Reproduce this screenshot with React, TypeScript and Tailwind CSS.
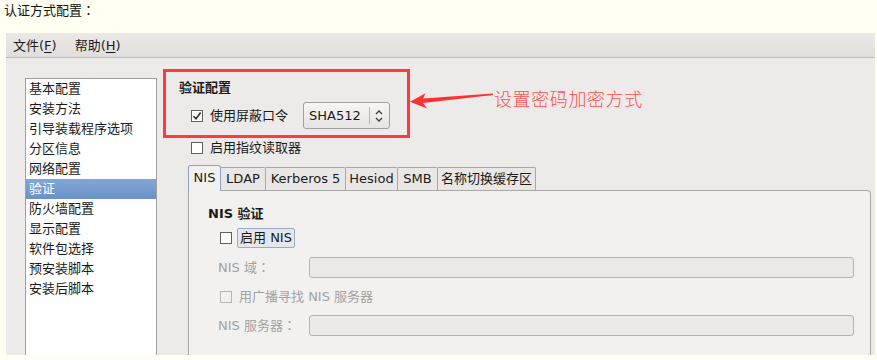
import { ReactNode } from 'react'

const sidebarItems = [
  '基本配置',
  '安装方法',
  '引导装载程序选项',
  '分区信息',
  '网络配置',
  '验证',
  '防火墙配置',
  '显示配置',
  '软件包选择',
  '预安装脚本',
  '安装后脚本',
]

const tabs = [
  { label: 'NIS', w: 'w-[33px]' },
  { label: 'LDAP', w: 'w-[45px]' },
  { label: 'Kerberos 5', w: 'w-[80px]' },
  { label: 'Hesiod', w: 'w-[52px]' },
  { label: 'SMB', w: 'w-[40px]' },
  { label: '名称切换缓存区', w: 'w-[98px]' },
]

function CheckBox({ checked = false, disabled = false }: { checked?: boolean; disabled?: boolean }) {
  return (
    <span
      className={`flex h-[12px] w-[12px] shrink-0 items-center justify-center border ${
        disabled ? 'border-[#b8b6b4] bg-[#f2f1f0]' : 'border-[#5f5f5f] bg-white'
      }`}
    >
      {checked && (
        <svg width="10" height="10" viewBox="0 0 10 10">
          <path d="M1.5 5.2 L4 7.8 L8.6 1.6" fill="none" stroke="#2e2e2e" strokeWidth="1.6" />
        </svg>
      )}
    </span>
  )
}

// centred full-width colon, as the original bitmap font draws it
function Colon() {
  return <span className="font-['Noto_Sans_CJK_TC',sans-serif]">：</span>
}

function TextField() {
  return <div className="h-[21px] w-[545px] rounded-[3px] border border-[#b5b3b1] bg-[#ebeae8]" />
}

function MenuItem({ text, mnemonic }: { text: string; mnemonic: string }) {
  return (
    <span>
      {text}(<span className="underline underline-offset-2">{mnemonic}</span>)
    </span>
  )
}

function Row({ children, className = '' }: { children: ReactNode; className?: string }) {
  return <div className={`flex items-center ${className}`}>{children}</div>
}

export default function App() {
  return (
    <div className="flex h-[360px] w-[877px] flex-col overflow-hidden bg-[#fffff2] font-['DejaVu_Sans','Noto_Sans_CJK_SC',sans-serif] text-[13px] text-[#1a1a1a]">
      {/* caption above the screenshot */}
      <div className="h-[33px] shrink-0 pl-[4px] pt-[2px] leading-[16px] text-[#111]">
        认证方式配置<Colon />
      </div>

      <div className="ml-[6px] flex h-[322px] w-[869px] flex-col bg-[#edebe9]">
        {/* menu bar */}
        <div className="flex h-[25px] shrink-0 items-center gap-[18px] border-b border-[#bebbb8] bg-gradient-to-b from-[#ebe9e7] to-[#e1dfdd] pl-[7px] pt-[1px]">
          <MenuItem text="文件" mnemonic="F" />
          <MenuItem text="帮助" mnemonic="H" />
        </div>

        <div className="flex min-h-0 flex-1">
          {/* section list */}
          <div className="ml-[19px] mt-[20px] w-[132px] shrink-0 border-x border-t border-[#9f9f9f] bg-white">
            {sidebarItems.map((item) => (
              <div
                key={item}
                className={`h-[20px] pl-[3px] leading-[20px] ${
                  item === '验证'
                    ? 'bg-gradient-to-b from-[#82a6d7] to-[#6a92c6] text-white'
                    : 'text-[#1a1a1a]'
                }`}
              >
                {item}
              </div>
            ))}
          </div>

          {/* settings area */}
          <div className="ml-[6px] flex min-w-0 flex-1 flex-col pt-[11px]">
            <div className="flex">
              <div className="flex h-[69px] w-[247px] shrink-0 flex-col border-[3px] border-[#ff3a3a] pl-[13px]">
                <div className="pt-[8px] font-bold leading-[16px]">验证配置</div>
                <Row className="mt-[6px] pl-[12px]">
                  <CheckBox checked />
                  <span className="ml-[7px] w-[78px]">使用屏蔽口令</span>
                  <div className="ml-[15px] flex h-[27px] w-[87px] items-center rounded-[3px] border border-[#a3a19f] bg-gradient-to-b from-[#f7f6f5] to-[#e6e4e2]">
                    <span className="w-[65px] pl-[5px]">SHA512</span>
                    <span className="h-[17px] w-px bg-[#b8b6b4]" />
                    <svg className="ml-[5px]" width="8" height="14" viewBox="0 0 8 14">
                      <path d="M1 5 L4 2 L7 5 M1 9 L4 12 L7 9" fill="none" stroke="#3c3c3c" strokeWidth="1.3" />
                    </svg>
                  </div>
                </Row>
              </div>

              {/* annotation */}
              <svg width="84" height="69" viewBox="0 0 84 69" className="shrink-0">
                <polygon
                  points="0,32.7 15.5,24.2 13,29.5 83,24.6 83,25.9 13,34 17,39.4"
                  fill="#ff3030"
                />
              </svg>
              <span className="mt-[19px] text-[18px] font-light leading-[20px] tracking-[0.6px] text-[#ff4f4f] font-['Noto_Sans_CJK_SC',sans-serif]">
                设置密码加密方式
              </span>
            </div>

            <Row className="mt-[2px] h-[16px] pl-[28px]">
              <CheckBox />
              <span className="ml-[7px]">启用指纹读取器</span>
            </Row>

            {/* tabs */}
            <div className="ml-[25px] mt-[9px] flex items-end">
              {tabs.map((t, i) =>
                i === 0 ? (
                  <div
                    key={t.label}
                    className={`relative z-10 -mb-px flex h-[26px] ${t.w} items-center justify-center rounded-t-[3px] border-x border-t border-[#8fa3bf] bg-[#f2f1f0] pb-[1px] leading-[16px]`}
                  >
                    {t.label}
                  </div>
                ) : (
                  <div
                    key={t.label}
                    className={`flex h-[23px] ${t.w} items-center justify-center rounded-tr-[2px] border-r border-t border-[#a9a7a5] bg-[#e9e7e5] leading-[16px]`}
                  >
                    {t.label}
                  </div>
                ),
              )}
            </div>

            <div className="ml-[25px] mr-[4px] flex flex-1 flex-col rounded-tr-[4px] border-x border-t border-[#a9a7a5] bg-[#f2f1f0] pl-[19px]">
              <div className="pt-[15px] font-bold leading-[16px]">NIS 验证</div>

              <Row className="mt-[6px] pl-[12px]">
                <CheckBox />
                <span className="ml-[5px] flex h-[20px] items-center rounded-[2px] border border-[#9aaac2] bg-[#e3e8ef] px-[2px]">
                  启用 NIS
                </span>
              </Row>

              <Row className="mt-[9px] pl-[10px] text-[#a3a3a3]">
                <span className="w-[91px]">
                  NIS 域<Colon />
                </span>
                <TextField />
              </Row>

              <Row className="mt-[11px] h-[16px] pl-[12px] text-[#a3a3a3]">
                <CheckBox disabled />
                <span className="ml-[7px]">用广播寻找 NIS 服务器</span>
              </Row>

              <Row className="mt-[10px] pl-[10px] text-[#a3a3a3]">
                <span className="w-[91px]">
                  NIS 服务器<Colon />
                </span>
                <TextField />
              </Row>
            </div>
          </div>
        </div>
      </div>
    </div>
  )
}
